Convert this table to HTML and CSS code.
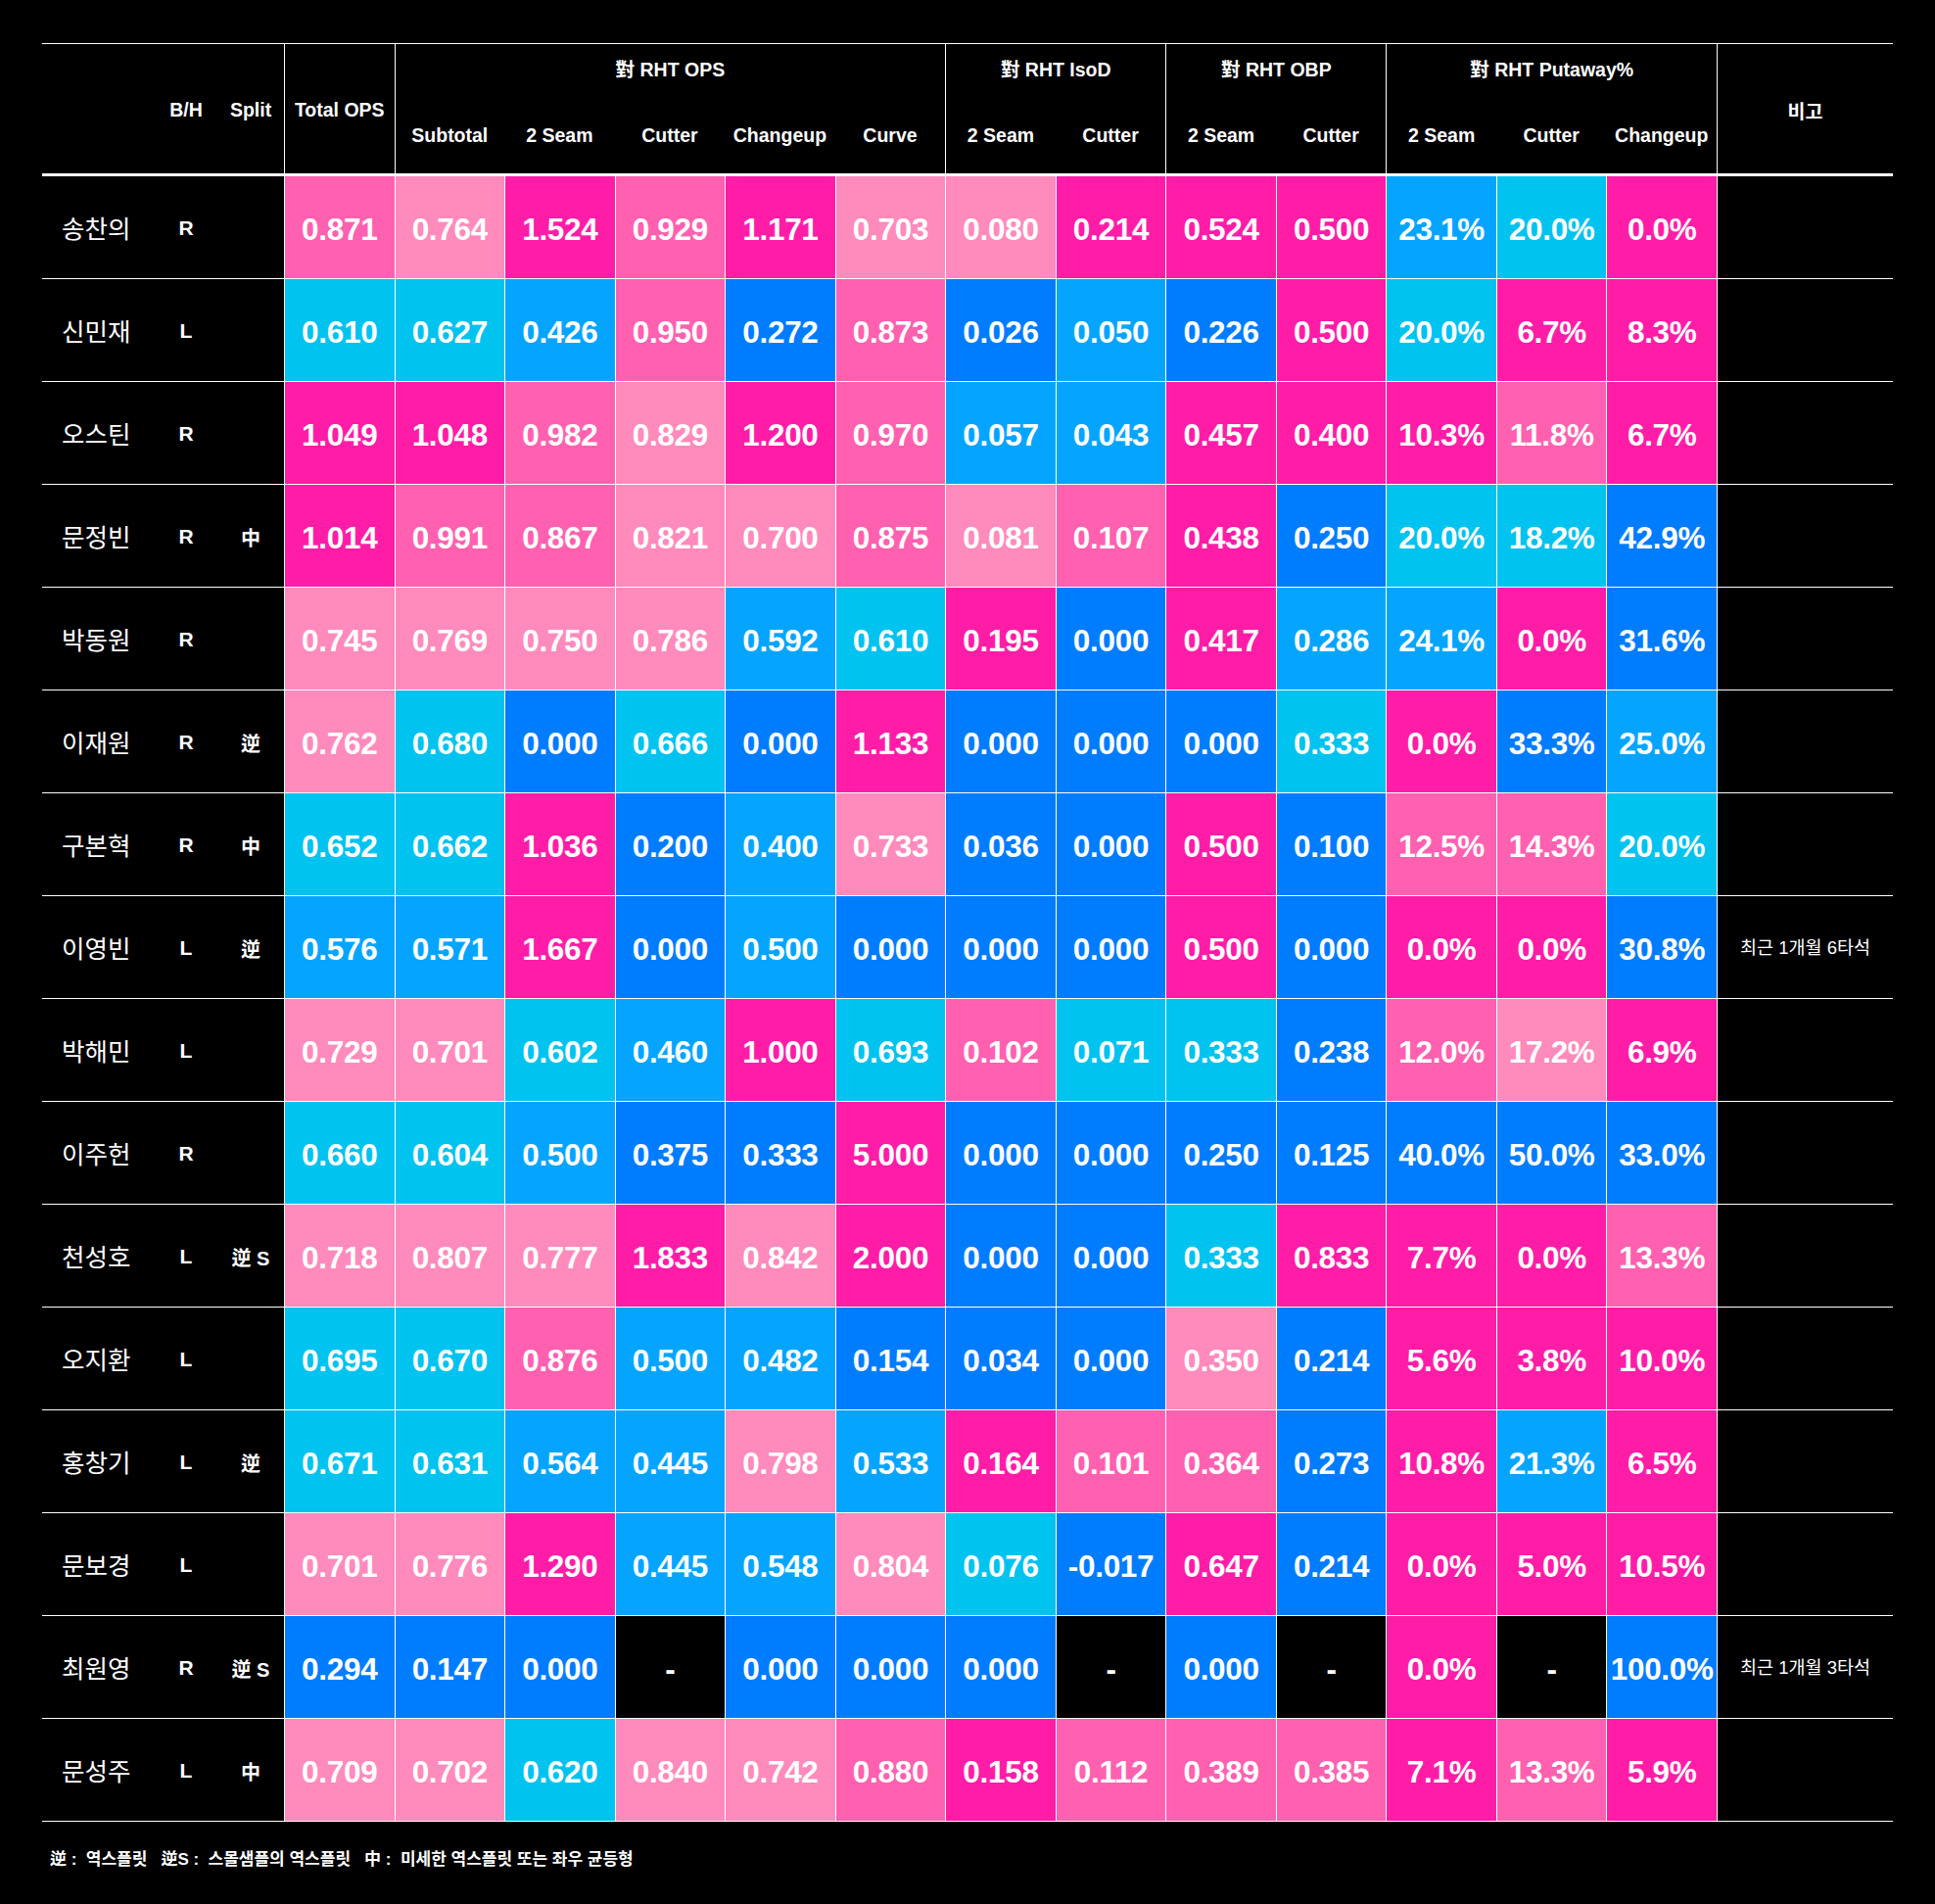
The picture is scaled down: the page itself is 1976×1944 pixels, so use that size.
FILE: index.html
```html
<!DOCTYPE html>
<html lang="ko">
<head>
<meta charset="utf-8">
<title>對 RHT</title>
<link rel="stylesheet" href="styles.css">
</head>
<body>
<div class="page">
  <div class="table">
    <div class="head">
      <div class="hd span"></div>
      <div class="hd span">B/H</div>
      <div class="hd span">Split</div>
      <div class="hd span line">Total OPS</div>
      <div class="hd grp g5 line">對 RHT OPS</div>
      <div class="hd grp g2 line">對 RHT IsoD</div>
      <div class="hd grp g2 line">對 RHT OBP</div>
      <div class="hd grp g3 line">對 RHT Putaway%</div>
      <div class="hd span line">비고</div>
      <div class="hd sub line">Subtotal</div>
      <div class="hd sub">2 Seam</div>
      <div class="hd sub">Cutter</div>
      <div class="hd sub">Changeup</div>
      <div class="hd sub">Curve</div>
      <div class="hd sub line">2 Seam</div>
      <div class="hd sub">Cutter</div>
      <div class="hd sub line">2 Seam</div>
      <div class="hd sub">Cutter</div>
      <div class="hd sub line">2 Seam</div>
      <div class="hd sub">Cutter</div>
      <div class="hd sub">Changeup</div>
    </div>

    <div class="row">
      <div class="name">송찬의</div><div class="bh">R</div><div class="split"></div>
      <div class="v c2">0.871</div><div class="v c3">0.764</div><div class="v c1">1.524</div><div class="v c2">0.929</div><div class="v c1">1.171</div><div class="v c3">0.703</div><div class="v c3">0.080</div><div class="v c1">0.214</div><div class="v c1">0.524</div><div class="v c1">0.500</div><div class="v c5">23.1%</div><div class="v c4">20.0%</div><div class="v c1">0.0%</div>
      <div class="note"></div>
    </div>
    <div class="row">
      <div class="name">신민재</div><div class="bh">L</div><div class="split"></div>
      <div class="v c4">0.610</div><div class="v c4">0.627</div><div class="v c5">0.426</div><div class="v c2">0.950</div><div class="v c6">0.272</div><div class="v c2">0.873</div><div class="v c6">0.026</div><div class="v c5">0.050</div><div class="v c6">0.226</div><div class="v c1">0.500</div><div class="v c4">20.0%</div><div class="v c1">6.7%</div><div class="v c1">8.3%</div>
      <div class="note"></div>
    </div>
    <div class="row">
      <div class="name">오스틴</div><div class="bh">R</div><div class="split"></div>
      <div class="v c1">1.049</div><div class="v c1">1.048</div><div class="v c2">0.982</div><div class="v c3">0.829</div><div class="v c1">1.200</div><div class="v c2">0.970</div><div class="v c5">0.057</div><div class="v c5">0.043</div><div class="v c1">0.457</div><div class="v c1">0.400</div><div class="v c1">10.3%</div><div class="v c2">11.8%</div><div class="v c1">6.7%</div>
      <div class="note"></div>
    </div>
    <div class="row">
      <div class="name">문정빈</div><div class="bh">R</div><div class="split">中</div>
      <div class="v c1">1.014</div><div class="v c2">0.991</div><div class="v c2">0.867</div><div class="v c3">0.821</div><div class="v c3">0.700</div><div class="v c2">0.875</div><div class="v c3">0.081</div><div class="v c2">0.107</div><div class="v c1">0.438</div><div class="v c6">0.250</div><div class="v c4">20.0%</div><div class="v c4">18.2%</div><div class="v c6">42.9%</div>
      <div class="note"></div>
    </div>
    <div class="row">
      <div class="name">박동원</div><div class="bh">R</div><div class="split"></div>
      <div class="v c3">0.745</div><div class="v c3">0.769</div><div class="v c3">0.750</div><div class="v c3">0.786</div><div class="v c5">0.592</div><div class="v c4">0.610</div><div class="v c1">0.195</div><div class="v c6">0.000</div><div class="v c1">0.417</div><div class="v c5">0.286</div><div class="v c5">24.1%</div><div class="v c1">0.0%</div><div class="v c6">31.6%</div>
      <div class="note"></div>
    </div>
    <div class="row">
      <div class="name">이재원</div><div class="bh">R</div><div class="split">逆</div>
      <div class="v c3">0.762</div><div class="v c4">0.680</div><div class="v c6">0.000</div><div class="v c4">0.666</div><div class="v c6">0.000</div><div class="v c1">1.133</div><div class="v c6">0.000</div><div class="v c6">0.000</div><div class="v c6">0.000</div><div class="v c4">0.333</div><div class="v c1">0.0%</div><div class="v c6">33.3%</div><div class="v c5">25.0%</div>
      <div class="note"></div>
    </div>
    <div class="row">
      <div class="name">구본혁</div><div class="bh">R</div><div class="split">中</div>
      <div class="v c4">0.652</div><div class="v c4">0.662</div><div class="v c1">1.036</div><div class="v c6">0.200</div><div class="v c5">0.400</div><div class="v c3">0.733</div><div class="v c6">0.036</div><div class="v c6">0.000</div><div class="v c1">0.500</div><div class="v c6">0.100</div><div class="v c2">12.5%</div><div class="v c2">14.3%</div><div class="v c4">20.0%</div>
      <div class="note"></div>
    </div>
    <div class="row">
      <div class="name">이영빈</div><div class="bh">L</div><div class="split">逆</div>
      <div class="v c5">0.576</div><div class="v c5">0.571</div><div class="v c1">1.667</div><div class="v c6">0.000</div><div class="v c5">0.500</div><div class="v c6">0.000</div><div class="v c6">0.000</div><div class="v c6">0.000</div><div class="v c1">0.500</div><div class="v c6">0.000</div><div class="v c1">0.0%</div><div class="v c1">0.0%</div><div class="v c6">30.8%</div>
      <div class="note">최근 1개월 6타석</div>
    </div>
    <div class="row">
      <div class="name">박해민</div><div class="bh">L</div><div class="split"></div>
      <div class="v c3">0.729</div><div class="v c3">0.701</div><div class="v c4">0.602</div><div class="v c5">0.460</div><div class="v c1">1.000</div><div class="v c4">0.693</div><div class="v c2">0.102</div><div class="v c4">0.071</div><div class="v c4">0.333</div><div class="v c6">0.238</div><div class="v c2">12.0%</div><div class="v c3">17.2%</div><div class="v c1">6.9%</div>
      <div class="note"></div>
    </div>
    <div class="row">
      <div class="name">이주헌</div><div class="bh">R</div><div class="split"></div>
      <div class="v c4">0.660</div><div class="v c4">0.604</div><div class="v c5">0.500</div><div class="v c6">0.375</div><div class="v c6">0.333</div><div class="v c1">5.000</div><div class="v c6">0.000</div><div class="v c6">0.000</div><div class="v c6">0.250</div><div class="v c6">0.125</div><div class="v c6">40.0%</div><div class="v c6">50.0%</div><div class="v c6">33.0%</div>
      <div class="note"></div>
    </div>
    <div class="row">
      <div class="name">천성호</div><div class="bh">L</div><div class="split">逆 S</div>
      <div class="v c3">0.718</div><div class="v c3">0.807</div><div class="v c3">0.777</div><div class="v c1">1.833</div><div class="v c3">0.842</div><div class="v c1">2.000</div><div class="v c6">0.000</div><div class="v c6">0.000</div><div class="v c4">0.333</div><div class="v c1">0.833</div><div class="v c1">7.7%</div><div class="v c1">0.0%</div><div class="v c2">13.3%</div>
      <div class="note"></div>
    </div>
    <div class="row">
      <div class="name">오지환</div><div class="bh">L</div><div class="split"></div>
      <div class="v c4">0.695</div><div class="v c4">0.670</div><div class="v c2">0.876</div><div class="v c5">0.500</div><div class="v c5">0.482</div><div class="v c6">0.154</div><div class="v c6">0.034</div><div class="v c6">0.000</div><div class="v c3">0.350</div><div class="v c6">0.214</div><div class="v c1">5.6%</div><div class="v c1">3.8%</div><div class="v c1">10.0%</div>
      <div class="note"></div>
    </div>
    <div class="row">
      <div class="name">홍창기</div><div class="bh">L</div><div class="split">逆</div>
      <div class="v c4">0.671</div><div class="v c4">0.631</div><div class="v c5">0.564</div><div class="v c5">0.445</div><div class="v c3">0.798</div><div class="v c5">0.533</div><div class="v c1">0.164</div><div class="v c2">0.101</div><div class="v c2">0.364</div><div class="v c6">0.273</div><div class="v c1">10.8%</div><div class="v c5">21.3%</div><div class="v c1">6.5%</div>
      <div class="note"></div>
    </div>
    <div class="row">
      <div class="name">문보경</div><div class="bh">L</div><div class="split"></div>
      <div class="v c3">0.701</div><div class="v c3">0.776</div><div class="v c1">1.290</div><div class="v c5">0.445</div><div class="v c5">0.548</div><div class="v c3">0.804</div><div class="v c4">0.076</div><div class="v c6">-0.017</div><div class="v c1">0.647</div><div class="v c6">0.214</div><div class="v c1">0.0%</div><div class="v c1">5.0%</div><div class="v c1">10.5%</div>
      <div class="note"></div>
    </div>
    <div class="row">
      <div class="name">최원영</div><div class="bh">R</div><div class="split">逆 S</div>
      <div class="v c6">0.294</div><div class="v c6">0.147</div><div class="v c6">0.000</div><div class="v c0">-</div><div class="v c6">0.000</div><div class="v c6">0.000</div><div class="v c6">0.000</div><div class="v c0">-</div><div class="v c6">0.000</div><div class="v c0">-</div><div class="v c1">0.0%</div><div class="v c0">-</div><div class="v c6">100.0%</div>
      <div class="note">최근 1개월 3타석</div>
    </div>
    <div class="row">
      <div class="name">문성주</div><div class="bh">L</div><div class="split">中</div>
      <div class="v c3">0.709</div><div class="v c3">0.702</div><div class="v c4">0.620</div><div class="v c3">0.840</div><div class="v c3">0.742</div><div class="v c2">0.880</div><div class="v c1">0.158</div><div class="v c2">0.112</div><div class="v c2">0.389</div><div class="v c2">0.385</div><div class="v c1">7.1%</div><div class="v c2">13.3%</div><div class="v c1">5.9%</div>
      <div class="note"></div>
    </div>
  </div>

  <div class="legend">
    <span class="item">逆 :&nbsp; 역스플릿</span>
    <span class="item">逆S :&nbsp; 스몰샘플의 역스플릿</span>
    <span class="item">中 :&nbsp; 미세한 역스플릿 또는 좌우 균등형</span>
  </div>
</div>
</body>
</html>
```

FILE: styles.css
```css
* {
  box-sizing: border-box;
  margin: 0;
  padding: 0;
}

html,
body {
  background: #000;
}

body {
  color: #fff;
  font-family: "Liberation Sans", "Noto Sans CJK KR", sans-serif;
}

.page {
  padding: 44px 43px 0;
}

.table {
  width: 1890px;
}

.head,
.row {
  display: grid;
  grid-template-columns: 115px 64px 68px repeat(13, 1fr) 180px;
}

/* ---------- header ---------- */
.head {
  border-top: 1px solid #fff;
  border-bottom: 3px solid #fff;
  grid-template-rows: 52px 80px;
}

.hd {
  display: flex;
  align-items: center;
  justify-content: center;
  font-size: 19.5px;
  font-weight: 700;
  white-space: nowrap;
}

.hd.span {
  grid-row: 1 / 3;
  padding-top: 3px;
}

.hd.grp {
  grid-row: 1;
  padding-bottom: 3px;
}

.hd.g5 { grid-column: span 5; }
.hd.g2 { grid-column: span 2; }
.hd.g3 { grid-column: span 3; }

.hd.sub {
  grid-row: 2;
  padding-top: 3px;
}

.line {
  border-left: 1px solid #fff;
}

/* ---------- body rows ---------- */
.row {
  height: 105px;
  border-bottom: 1px solid #fff;
}

.name {
  display: flex;
  align-items: center;
  padding-left: 20px;
  font-size: 25.5px;
  font-weight: 400;
  padding-bottom: 2px;
}

.bh,
.split {
  display: flex;
  align-items: center;
  justify-content: center;
  font-size: 21px;
  font-weight: 700;
  padding-top: 2px;
}

.split {
  font-size: 20px;
  white-space: nowrap;
}

.v {
  display: flex;
  align-items: center;
  justify-content: center;
  border-left: 1px solid #fff;
  font-size: 31.5px;
  font-weight: 700;
  letter-spacing: -0.3px;
  white-space: nowrap;
  padding-top: 5px;
}

.note {
  display: flex;
  align-items: center;
  justify-content: center;
  border-left: 1px solid #fff;
  font-size: 18.5px;
  font-weight: 400;
  white-space: nowrap;
  padding-bottom: 2px;
}

/* cell colour scale */
.c0 { background: #000; }
.c1 { background: #ff1ca7; }
.c2 { background: #ff60b0; }
.c3 { background: #ff8abc; }
.c4 { background: #00c3f0; }
.c5 { background: #05a5ff; }
.c6 { background: #007cff; }

/* ---------- legend ---------- */
.legend {
  display: flex;
  gap: 14px;
  padding: 29px 0 0 8px;
  font-size: 17px;
  font-weight: 700;
  line-height: 20px;
}
```
